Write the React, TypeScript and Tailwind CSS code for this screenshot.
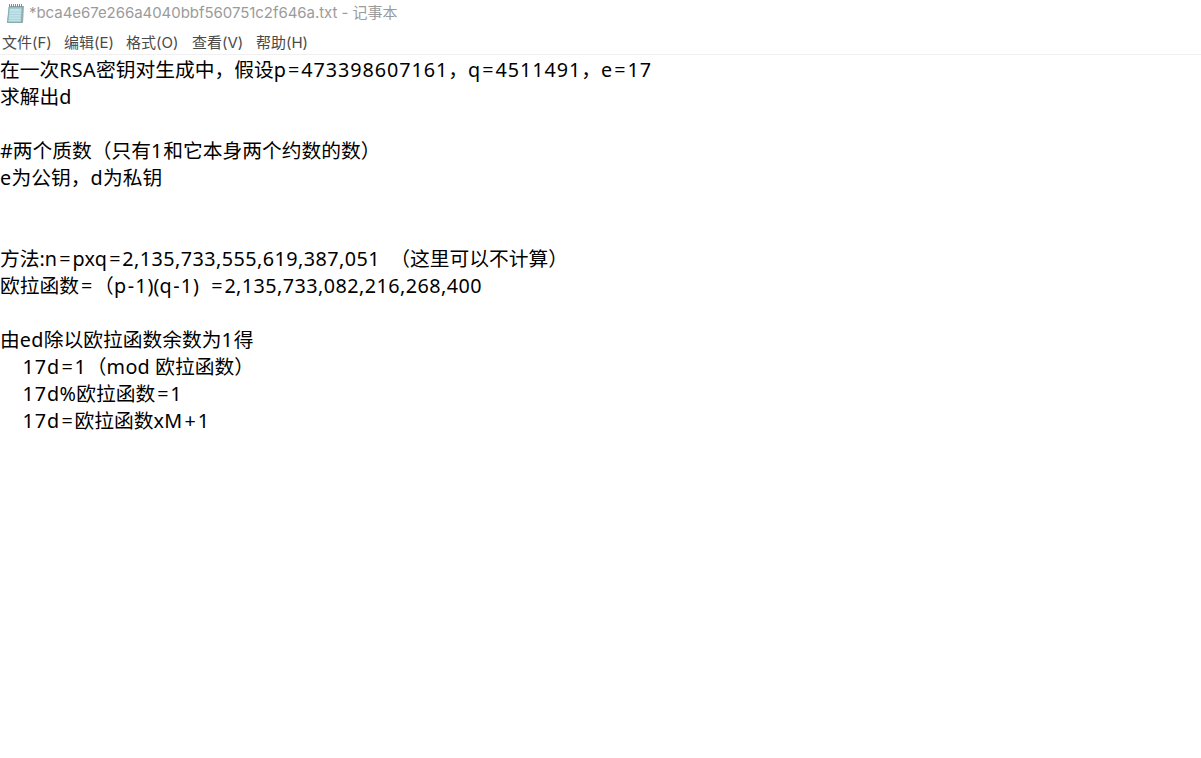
const lines = [
  '在一次RSA密钥对生成中，假设p=473398607161，q=4511491，e=17',
  '求解出d',
  '',
  '#两个质数（只有1和它本身两个约数的数）',
  'e为公钥，d为私钥',
  '',
  '',
  '方法:n=pxq=2,135,733,555,619,387,051  （这里可以不计算）',
  '欧拉函数=（p-1)(q-1)  =2,135,733,082,216,268,400',
  '',
  '由ed除以欧拉函数余数为1得',
  '    17d=1（mod 欧拉函数）',
  '    17d%欧拉函数=1',
  '    17d=欧拉函数xM+1',
]

const menus = ['文件(F)', '编辑(E)', '格式(O)', '查看(V)', '帮助(H)']

// latin glyphs run wider than Noto here, so digits and operators get their own spacing
function Line({ text }: { text: string }) {
  const parts = text.split(/(^ +|\d[\d,]*\d|\d|=|\+|-|[A-Za-z%]+)/).filter(Boolean)
  return (
    <div className="h-[27px]">
      {parts.map((p, i) => {
        if (p === '=' || p === '+') return <span key={i} className="px-[1.9px]">{p}</span>
        if (p === '-') return <span key={i} className="px-[1.3px]">{p}</span>
        if (/^ +$/.test(p) && i === 0) return <span key={i} className="pr-[2px]">{p}</span>
        if (p.includes(',') && /^\d/.test(p)) return <span key={i} className="tracking-[0.45px]">{p}</span>
        if (/^\d/.test(p)) return <span key={i} className="tracking-[0.95px]">{p}</span>
        if (/^[A-Za-z%]/.test(p)) return <span key={i} className="tracking-[0.3px]">{p}</span>
        return <span key={i}>{p}</span>
      })}
    </div>
  )
}

function NotepadIcon() {
  return (
    <svg width="20" height="21" viewBox="0 0 20 21" className="ml-[5px] shrink-0">
      <path d="M4 3h15l-1 17H2z" fill="#a8a8a8" />
      <path d="M4 4h13.5l-1 15.5H2.5z" fill="#9fcdd6" stroke="#7fa9b1" strokeWidth="0.8" />
      <path d="M5 6h11l-.8 12H4z" fill="#c4e3e9" />
      <path d="M4.9 9h10.8M4.7 11.5h10.8M4.5 14h10.8M4.3 16.5h10.8" stroke="#aad3da" strokeWidth="1" />
      <path d="M4 2.5h13" stroke="#8a8a8a" strokeWidth="3" strokeDasharray="1 1" />
    </svg>
  )
}

export default function App() {
  return (
    <div className="flex h-[758px] w-[1201px] flex-col overflow-hidden bg-white font-['Noto_Sans','Noto_Sans_CJK_SC',sans-serif] text-black">
      <div className="flex h-[26px] items-center font-['Inter','Noto_Sans_CJK_SC',sans-serif]">
        <NotepadIcon />
        <span className="ml-[4px] text-[15px] tracking-[-0.05px] text-[#9b9b9b]">*bca4e67e266a4040bbf560751c2f646a.txt - 记事本</span>
      </div>
      <div className="grid h-[29px] grid-cols-[62px_62px_66px_64px_auto] items-center justify-start border-b border-[#f0f0f0] pl-[2px] pt-[6px] font-['Inter','Noto_Sans_CJK_SC',sans-serif] text-[15px] text-[#4a4a4a]">
        {menus.map(m => (
          <span key={m}>{m}</span>
        ))}
      </div>
      <div className="pt-[1px] text-[19.75px] leading-[27px] whitespace-pre">
        {lines.map((l, i) => (
          <Line key={i} text={l} />
        ))}
      </div>
    </div>
  )
}
